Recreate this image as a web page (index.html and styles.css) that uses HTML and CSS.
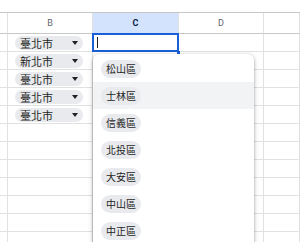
FILE: index.html
```html
<!DOCTYPE html>
<html lang="zh-Hant">
<head>
    <meta charset="UTF-8">
    <title>下拉式選單</title>
    <link rel="stylesheet" href="styles.css">
</head>
<body>

    <div class="sheet">
        <!-- 欄標題 -->
        <div class="cell head"></div>
        <div class="cell head">B</div>
        <div class="cell head active">C</div>
        <div class="cell head">D</div>
        <div class="cell head"></div>

        <!-- 第 1 列 -->
        <div class="cell"></div>
        <div class="cell"><span class="chip">臺北市<i class="arrow"></i></span></div>
        <div class="cell selected"><span class="caret"></span></div>
        <div class="cell"></div>
        <div class="cell"></div>

        <div class="cell"></div>
        <div class="cell"><span class="chip">新北市<i class="arrow"></i></span></div>
        <div class="cell"></div>
        <div class="cell"></div>
        <div class="cell"></div>

        <div class="cell"></div>
        <div class="cell"><span class="chip">臺北市<i class="arrow"></i></span></div>
        <div class="cell"></div>
        <div class="cell"></div>
        <div class="cell"></div>

        <div class="cell"></div>
        <div class="cell"><span class="chip">臺北市<i class="arrow"></i></span></div>
        <div class="cell"></div>
        <div class="cell"></div>
        <div class="cell"></div>

        <div class="cell"></div>
        <div class="cell"><span class="chip">臺北市<i class="arrow"></i></span></div>
        <div class="cell"></div>
        <div class="cell"></div>
        <div class="cell"></div>

        <script>
            // 其餘空白列
            for (let i = 0; i < 7; i++) {
                document.write('<div class="cell"></div>'.repeat(5));
            }
        </script>

        <!-- 下拉選單 -->
        <div class="menu">
            <div class="item"><span class="tag">松山區</span></div>
            <div class="item hover"><span class="tag">士林區</span></div>
            <div class="item"><span class="tag">信義區</span></div>
            <div class="item"><span class="tag">北投區</span></div>
            <div class="item"><span class="tag">大安區</span></div>
            <div class="item"><span class="tag">中山區</span></div>
            <div class="item"><span class="tag">中正區</span></div>
        </div>
    </div>

</body>
</html>
```
FILE: styles.css
```css
* {
    box-sizing: border-box;
}
body {
    margin: 0;
    background-color: #ffffff;
    font-family: "Noto Sans CJK TC", "Noto Sans", sans-serif;
    color: #1f1f1f;
    overflow: hidden;
}
.sheet {
    position: relative;
    height: 230px;
    overflow: hidden;
    margin-top: 12px;
    border-top: 1px solid #c7c7c7;
    display: grid;
    grid-template-columns: 8px 85px 86px 85px 1fr;
    grid-template-rows: 21px;
    grid-auto-rows: 18px;
}
.cell {
    position: relative;
    border-right: 1px solid #e1e1e1;
    border-bottom: 1px solid #e1e1e1;
    display: flex;
    align-items: center;
    padding-left: 7px;
}
.head {
    justify-content: center;
    padding-left: 0;
    border-bottom-color: #c7c7c7;
    font-family: "Roboto", "Liberation Sans", sans-serif;
    font-size: 9px;
    color: #5f6368;
}
.head.active {
    background-color: #d3e3fd;
    color: #0b1d44;
    font-weight: bold;
}
.selected::after {
    content: "";
    position: absolute;
    left: -1px;
    top: -1px;
    right: -1px;
    bottom: -1px;
    border: 2px solid #1a5fd6;
}
.selected::before {
    content: "";
    position: absolute;
    right: -2px;
    bottom: -3px;
    width: 3px;
    height: 3px;
    background-color: #1a5fd6;
    z-index: 2;
}
.caret {
    width: 1px;
    height: 11px;
    margin-left: -3px;
    background-color: #1f1f1f;
}
.chip {
    display: flex;
    align-items: center;
    width: 68px;
    height: 14px;
    margin-top: 1px;
    padding-left: 5px;
    border-radius: 7px;
    background-color: #e8eaed;
    font-size: 11px;
    line-height: 14px;
}
.arrow {
    margin-left: auto;
    margin-right: 5px;
    width: 0;
    height: 0;
    border-left: 3.5px solid transparent;
    border-right: 3.5px solid transparent;
    border-top: 4px solid #202124;
}
.menu {
    position: absolute;
    left: 93px;
    top: 41px;
    width: 161px;
    height: 200px;
    padding-top: 1px;
    background-color: #ffffff;
    border-radius: 6px;
    box-shadow: 0 1px 3px rgba(0, 0, 0, 0.3), 0 2px 6px rgba(0, 0, 0, 0.15);
    z-index: 3;
}
.item {
    height: 27px;
    display: flex;
    align-items: center;
    padding-left: 8px;
}
.item.hover {
    background-color: #f1f3f4;
}
.tag {
    height: 18px;
    padding: 0 5px;
    border-radius: 9px;
    background-color: #e8eaed;
    font-size: 10px;
    line-height: 18px;
}
```
